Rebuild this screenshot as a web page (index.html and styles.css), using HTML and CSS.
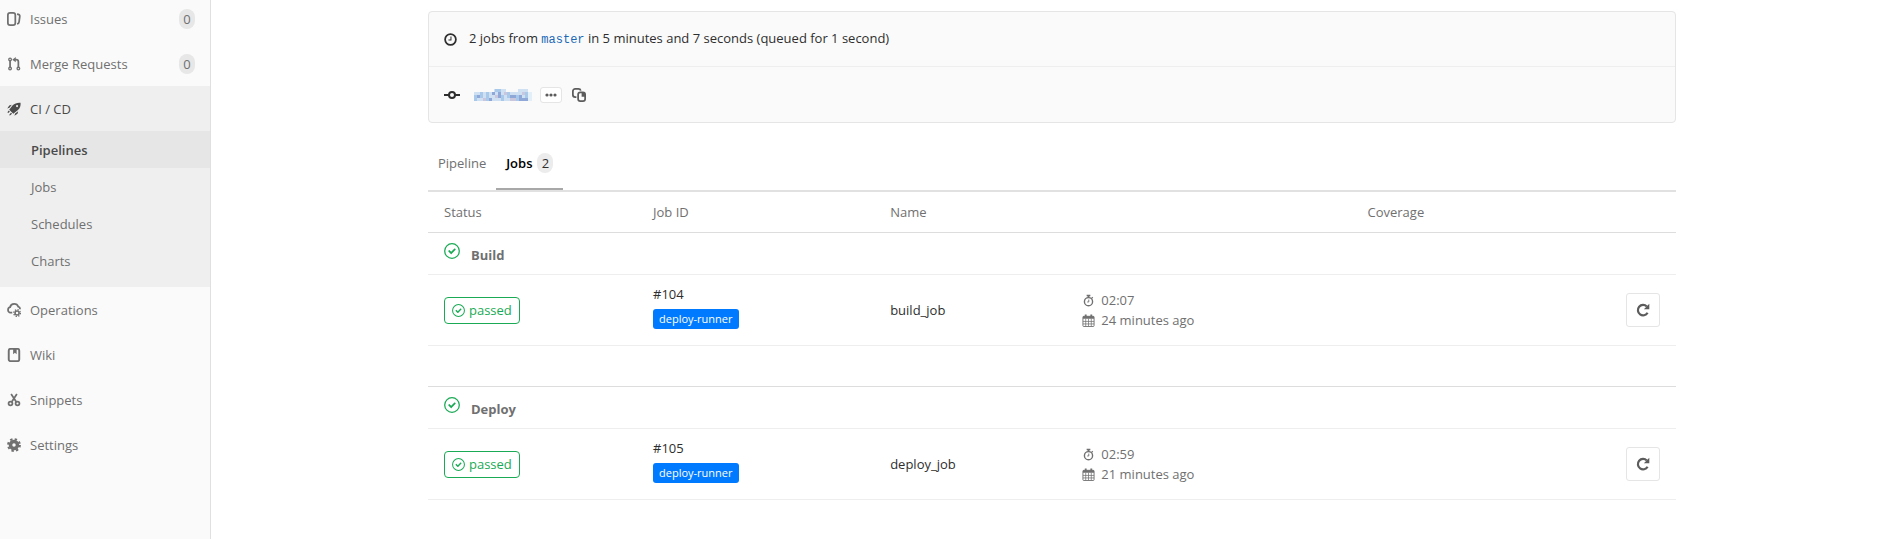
FILE: index.html
```
<!DOCTYPE html>
<html lang="en">
<head>
<meta charset="utf-8">
<title>Pipeline jobs</title>
<link rel="stylesheet" href="styles.css">
</head>
<body>
<svg class="sprite" aria-hidden="true">
  <symbol id="check" viewBox="0 0 14 14"><circle cx="7" cy="7" r="6.4" fill="none" stroke="currentColor" stroke-width="1.1"/><path d="M6.28 7.7 4.93 6.35a.4.4 0 0 0-.57 0l-.52.52a.4.4 0 0 0 0 .57l2.16 2.16a.4.4 0 0 0 .57 0l3.6-3.6a.4.4 0 0 0 0-.57l-.53-.52a.4.4 0 0 0-.56 0z" fill="currentColor"/></symbol>
  <symbol id="stopwatch" viewBox="0 0 12 14"><g fill="none" stroke="currentColor"><circle cx="6" cy="8.3" r="4.4" stroke-width="1.5"/><path d="M6.3 6v2.6H4.6"/><path d="m9.4 4.6 1.2-1.1" stroke-width="1.3"/></g><path d="M4 .8h4v1.5H7V4H5V2.300H4z" fill="currentColor"/></symbol>
  <symbol id="calendar" viewBox="0 0 14 14"><path d="M2 2.500h10A1 1 0 0 1 13 3.500v9a1 1 0 0 1-1 1H2a1 1 0 0 1-1-1v-9a1 1 0 0 1 1-1z" fill="none" stroke="currentColor"/><path d="M1 2.500h12V5H1zM3 .5h2v3H3zM9 .5h2v3H9z" fill="currentColor"/><path d="M1 8h12M1 10.700h12M4 5v8M7 5v8M10 5v8" fill="none" stroke="currentColor" stroke-width=".8"/></symbol>
  <symbol id="retry" viewBox="0 0 14 14"><path d="M11.600 9.800A5.200 5.200 0 1 1 10.800 3.500" fill="none" stroke="currentColor" stroke-width="2.200"/><path d="M13.300.8v5.400H7.900z" fill="currentColor"/></symbol>
</svg>
<div class="layout">
  <nav class="sidebar" aria-label="Project">
    <ul class="menu">
      <li><a class="item" href="#"><svg class="icon" viewBox="0 0 16 16"><rect x="1" y="1" width="8.500" height="14" rx="2.500" fill="none" stroke="currentColor" stroke-width="2"/><path d="M11.500 2.500c2 .2 3.400.8 3.100 2.800l-.8 6c-.2 1.500-1 2.200-2.300 2.400" fill="none" stroke="currentColor" stroke-width="2"/></svg><span>Issues</span><span class="count">0</span></a></li>
      <li><a class="item" href="#"><svg class="icon" viewBox="0 0 16 16"><g fill="none" stroke="currentColor" stroke-width="1.500"><circle cx="3.500" cy="2.800" r="1.500"/><circle cx="3.500" cy="13.200" r="1.500"/><circle cx="13" cy="13.200" r="1.500"/><path d="M3.500 4.500v7M13 11.500V5.500q0-2.500-2.500-2.500H9" stroke-width="2"/></g><path d="m6 3 4-3v6z" fill="currentColor"/></svg><span>Merge Requests</span><span class="count">0</span></a></li>
      <li class="open">
        <a class="item current" href="#"><svg class="icon" viewBox="0 0 16 16" fill="currentColor"><path fill-rule="evenodd" d="M15.500.8c.3 3.800-.6 6.300-3.300 8.700l-5 4-4.700-4.700 4-5C8.900 1.400 11.700.5 15.500.8zM11.500 3.500a1.200 1.200 0 1 0 0 2.400 1.200 1.200 0 0 0 0-2.400z"/><path d="M5.500 3.200 2.600 4 .3 7.500l2.500-.8zM12.800 10.500l-.8 2.900-3.500 2.300.8-2.500z"/><path d="m2 9.800-1.500 2 .8.800 2-1.500zM4.500 12.300l-2 2.500.8.700 2.500-2z"/></svg><span>CI / CD</span></a>
        <ul class="submenu">
          <li><a class="subitem active" href="#" aria-current="page">Pipelines</a></li>
          <li><a class="subitem" href="#">Jobs</a></li>
          <li><a class="subitem" href="#">Schedules</a></li>
          <li><a class="subitem" href="#">Charts</a></li>
        </ul>
      </li>
      <li><a class="item" href="#"><svg class="icon" viewBox="0 0 16 16"><path d="M6 11H4a3 3 0 0 1-2.800-3.300c0-1.600 1-2.600 2.300-2.900C4 2.400 5.800 1 8.200 1c2.500 0 4 1.200 4.700 3.200 1.300.4 2.100 1.300 2.100 2.800" fill="none" stroke="currentColor" stroke-width="2"/><circle cx="11.500" cy="11.500" r="2.300" fill="none" stroke="currentColor" stroke-width="1.800"/><circle cx="11.500" cy="11.500" r="3.800" fill="none" stroke="currentColor" stroke-width="1.500" stroke-dasharray="1.500 1.485"/></svg><span>Operations</span></a></li>
      <li><a class="item" href="#"><svg class="icon" viewBox="0 0 16 16"><rect x="2" y="1" width="12" height="14" rx="2" fill="none" stroke="currentColor" stroke-width="2.200"/><path d="M7 1h4v6L9 5.500 7 7z" fill="currentColor"/></svg><span>Wiki</span></a></li>
      <li><a class="item" href="#"><svg class="icon" viewBox="0 0 16 16" fill="none" stroke="currentColor" stroke-width="2"><circle cx="4" cy="12" r="2.200"/><circle cx="12" cy="12" r="2.200"/><path d="m5.300 10.200 6-9M10.700 10.200l-6-9"/></svg><span>Snippets</span></a></li>
      <li><a class="item" href="#"><svg class="icon" viewBox="0 0 16 16" fill="none" stroke="currentColor"><circle cx="8" cy="8" r="4" stroke-width="4"/><circle cx="8" cy="8" r="6.700" stroke-width="2.400" stroke-dasharray="2.700 2.562"/></svg><span>Settings</span></a></li>
    </ul>
  </nav>
  <main class="main">
    <div class="container">
      <section class="info">
        <div class="info-row">
          <svg class="info-icon" viewBox="0 0 14 14" fill="none" stroke="currentColor"><circle cx="7" cy="7" r="5.800" stroke-width="1.900"/><path d="M7.500 3.800v3.700H4.800" stroke-width="1.100"/></svg>
          <p class="summary">2 jobs from <a class="ref" href="#">master</a> in 5 minutes and 7 seconds (queued for 1 second)</p>
        </div>
        <div class="info-row">
          <svg class="commit-icon" viewBox="0 0 16 16" fill="none" stroke="currentColor" stroke-width="2"><circle cx="8" cy="8" r="3"/><path d="M0 8h5M11 8h5"/></svg>
          <a class="sha" href="#" aria-label="Commit"><svg class="mosaic" viewBox="0 0 58 12" shape-rendering="crispEdges"><path d="M0 3h54v9H0zM20 0h12v3H20zM44 0h10v3H44z" fill="#cfe0f2"/><path d="M0 6h3v6H0zM6 3h3v6H6zM12 3h3v9h-3zM21 0h6v3h-6zM27 6h3v6h-3zM33 3h3v6h-3zM42 6h3v6h-3zM51 3h3v6h-3z" fill="#a9c9ea"/><path d="M3 6h3v3H3zM15 9h3v3h-3zM18 3h3v3h-3zM24 3h3v6h-3zM36 6h6v3h-6zM45 6h3v6h-3zM48 9h6v3h-6z" fill="#8fa8d8"/><path d="M9 9h3v3H9zM21 6h3v3h-3zM30 3h3v3h-3zM36 9h6v3h-6zM48 3h3v3h-3z" fill="#c9c6de"/><path d="M54 3h4v9h-4z" fill="#e3eff8"/></svg></a>
          <button class="dots" type="button" aria-label="Toggle commit description"><svg class="dots-icon" viewBox="0 0 12 4" fill="currentColor"><circle cx="2" cy="2" r="1.600"/><circle cx="6" cy="2" r="1.600"/><circle cx="10" cy="2" r="1.600"/></svg></button>
          <button class="copy" type="button" aria-label="Copy commit SHA"><svg class="copy-icon" viewBox="0 0 16 16" fill="none" stroke="currentColor" stroke-width="2"><path d="M5 10.500H3.700A2.700 2.700 0 0 1 1 7.800V3.700A2.700 2.700 0 0 1 3.700 1h3.600q2.200 0 2.700 2"/><rect x="7" y="5" width="8" height="10" rx="2.500"/><path d="M11 5h2l2 2v3h-4z" fill="currentColor" stroke="none"/></svg></button>
        </div>
      </section>
      <nav class="tabs" aria-label="Pipeline views">
        <a class="tab" href="#">Pipeline</a>
        <a class="tab selected" href="#" aria-current="page">Jobs <span class="tab-count">2</span></a>
      </nav>
      <table class="jobs">
        <colgroup><col class="c-status"><col class="c-id"><col class="c-name"><col class="c-time"><col class="c-cover"><col class="c-act"></colgroup>
        <thead>
          <tr><th>Status</th><th>Job ID</th><th>Name</th><th></th><th>Coverage</th><th></th></tr>
        </thead>
        <tbody>
          <tr class="stage"><th colspan="6"><div class="stage-name"><svg class="stage-icon"><use href="#check"/></svg><span>Build</span></div></th></tr>
          <tr class="job">
            <td><a class="passed" href="#"><svg class="passed-icon"><use href="#check"/></svg>passed</a></td>
            <td class="job-id"><a class="id" href="#">#104</a><span class="label">deploy-runner</span></td>
            <td>build_job</td>
            <td><p class="time"><svg class="time-icon"><use href="#stopwatch"/></svg>02:07</p><p class="time"><svg class="time-icon"><use href="#calendar"/></svg>24 minutes ago</p></td>
            <td></td>
            <td class="act"><button class="retry" type="button" aria-label="Retry"><svg class="retry-icon"><use href="#retry"/></svg></button></td>
          </tr>
          <tr class="spacer"><td colspan="6"></td></tr>
        </tbody>
        <tbody>
          <tr class="stage"><th colspan="6"><div class="stage-name"><svg class="stage-icon"><use href="#check"/></svg><span>Deploy</span></div></th></tr>
          <tr class="job">
            <td><a class="passed" href="#"><svg class="passed-icon"><use href="#check"/></svg>passed</a></td>
            <td class="job-id"><a class="id" href="#">#105</a><span class="label">deploy-runner</span></td>
            <td>deploy_job</td>
            <td><p class="time"><svg class="time-icon"><use href="#stopwatch"/></svg>02:59</p><p class="time"><svg class="time-icon"><use href="#calendar"/></svg>21 minutes ago</p></td>
            <td></td>
            <td class="act"><button class="retry" type="button" aria-label="Retry"><svg class="retry-icon"><use href="#retry"/></svg></button></td>
          </tr>
        </tbody>
      </table>
    </div>
  </main>
</div>
</body>
</html>
```
FILE: styles.css
```
* { box-sizing: border-box; }
body { margin: 0; background: #fff; color: #2e2e2e; font: 13px/20px "Open Sans", "Noto Sans", sans-serif; }
a { color: inherit; text-decoration: none; }
p, ul { margin: 0; padding: 0; list-style: none; }
svg { flex: none; display: block; }
button { padding: 0; font: inherit; background: #fff; border: 1px solid #e5e5e5; border-radius: 3px; color: #5c5c5c; display: inline-flex; align-items: center; justify-content: center; }
.sprite { display: none; }

.layout { display: flex; min-height: 100vh; overflow: hidden; }
.sidebar { flex: none; width: 211px; background: #fafafa; border-right: 1px solid #e0e0e0; color: #707070; }
.menu { margin-top: -4px; }
.item { display: flex; align-items: center; gap: 9px; height: 45px; padding: 0 15px 0 7px; }
.icon { width: 14px; height: 14px; }
.count { margin-left: auto; min-width: 16px; padding: 0 4px; border-radius: 10px; background: #e7e7e7; text-align: center; }
.open { background: #efefef; }
.current { color: #4a4a4a; font-weight: 500; }
.submenu { padding-bottom: 8px; }
.subitem { display: flex; align-items: center; height: 37px; padding-left: 31px; }
.active { background: #e6e6e6; color: #4a4a4a; font-weight: 600; }

.main { flex: 1; min-width: 0; padding: 11px 16px 0 25px; }
.container { max-width: 1248px; margin: 0 auto; }
.info { border: 1px solid #e5e5e5; border-radius: 4px; background: #fafafa; }
.info-row { display: flex; align-items: center; height: 54px; padding: 0 15px; }
.info-row + .info-row { border-top: 1px solid #eee; height: 56px; }
.info-icon { width: 13px; height: 13px; margin-right: 12px; }
.ref { color: #1b69b6; font: 12px/20px "Liberation Mono", monospace; }
.commit-icon { width: 16px; height: 16px; margin-right: 14px; }
.mosaic { width: 58px; height: 12px; }
.dots { width: 22px; height: 16px; margin: 0 10px 0 8px; }
.dots-icon { width: 12px; height: 4px; }
.copy { border: 0; background: none; }
.copy-icon { width: 14px; height: 14px; }

.tabs { display: flex; margin-top: 15px; height: 54px; border-bottom: 2px solid #e1e1e1; color: #707070; }
.tab { display: flex; align-items: center; gap: 5px; height: 52px; padding: 0 10px; border-bottom: 2px solid transparent; }
.selected { border-color: #a8a8a8; color: #000; font-weight: 600; }
.tab-count { min-width: 16px; padding: 0 4px; border-radius: 10px; background: #ececec; color: #2e2e2e; font-weight: 400; text-align: center; }

.jobs { width: 100%; table-layout: fixed; border-collapse: separate; border-spacing: 0; }
.c-status { width: 16.75%; }
.c-id { width: 19%; }
.c-name { width: 15.4%; }
.c-time { width: 22.85%; }
.c-cover { width: 16%; }
.c-act { width: 10%; }
.jobs th, .jobs td { padding: 0 16px; text-align: left; vertical-align: middle; border-bottom: 1px solid #eee; }
.jobs thead th { height: 41px; color: #707070; font-weight: 400; border-color: #ddd; }
.jobs .stage th { height: 42px; color: #707070; font-weight: 700; }
.stage-name { display: flex; gap: 11px; align-items: flex-start; height: 22px; }
.stage-name span { padding-top: 2px; }
.stage-icon { width: 16px; height: 16px; color: #1aaa55; }
.jobs .job td { height: 71px; }
.jobs .job .job-id { padding-bottom: 7px; }
.jobs .spacer td { height: 41px; border-color: #ddd; }
.passed { display: inline-flex; align-items: center; gap: 4px; height: 27px; padding: 0 7px; border: 1px solid #1aaa55; border-radius: 4px; color: #1aaa55; vertical-align: middle; }
.passed-icon { width: 13px; height: 13px; }
.id { display: block; }
.label { display: inline-block; margin-top: 5px; padding: 0 6px; border-radius: 3px; background: #007bff; color: #fff; font-size: 11px; font-weight: 500; vertical-align: top; }
.time { display: flex; align-items: center; gap: 6px; color: #707070; }
.time-icon { width: 13px; height: 13px; }
.jobs .act { text-align: right; }
.retry { width: 34px; height: 34px; vertical-align: middle; }
.retry-icon { width: 14px; height: 14px; }
```
